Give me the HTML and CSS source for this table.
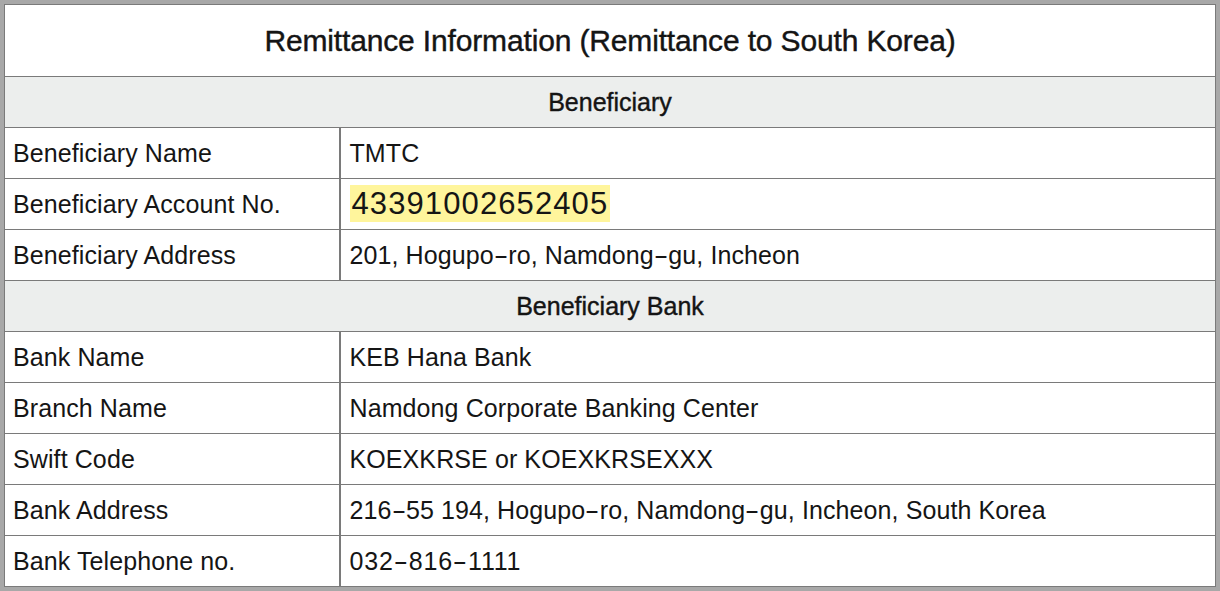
FILE: index.html
```html
<!DOCTYPE html>
<html lang="en">
<head>
<meta charset="utf-8">
<title>Remittance Information</title>
<link rel="stylesheet" href="styles.css">
</head>
<body>
<div class="frame">
  <table class="remit">
    <colgroup>
      <col class="col-label">
      <col class="col-value">
    </colgroup>
    <thead>
      <tr><th colspan="2" class="title">Remittance Information (Remittance to South Korea)</th></tr>
    </thead>
    <tbody>
      <tr><th colspan="2" class="section">Beneficiary</th></tr>
      <tr><td class="label">Beneficiary Name</td><td class="value">TMTC</td></tr>
      <tr><td class="label">Beneficiary Account No.</td><td class="value"><span class="mark">43391002652405</span></td></tr>
      <tr><td class="label">Beneficiary Address</td><td class="value">201, Hogupo<span class="hy">-</span>ro, Namdong<span class="hy">-</span>gu, Incheon</td></tr>
      <tr><th colspan="2" class="section">Beneficiary Bank</th></tr>
      <tr><td class="label">Bank Name</td><td class="value">KEB Hana Bank</td></tr>
      <tr><td class="label">Branch Name</td><td class="value">Namdong Corporate Banking Center</td></tr>
      <tr><td class="label">Swift Code</td><td class="value">KOEXKRSE or KOEXKRSEXXX</td></tr>
      <tr><td class="label">Bank Address</td><td class="value">216<span class="hy">-</span>55 194, Hogupo<span class="hy">-</span>ro, Namdong<span class="hy">-</span>gu, Incheon, South Korea</td></tr>
      <tr><td class="label">Bank Telephone no.</td><td class="value phone">032<span class="hy">-</span>816<span class="hy">-</span>1111</td></tr>
    </tbody>
  </table>
</div>
</body>
</html>
```
FILE: styles.css
```css
html, body {
  margin: 0;
  padding: 0;
}
body {
  background: #a8a8a8;
  font-family: "Liberation Sans", Arial, sans-serif;
  color: #151515;
}
.frame {
  padding: 4px 4px 5px 4px;
}
.remit {
  width: 100%;
  border-collapse: collapse;
  background: #fff;
  border: 1px solid #707070;
  table-layout: fixed;
}
.col-label { width: 335px; }
.remit th, .remit td {
  border: 1px solid #7a7a7a;
  padding: 0;
  box-sizing: border-box;
}
.remit .title {
  height: 72px;
  font-size: 30px;
  font-weight: normal;
  text-align: center;
  letter-spacing: -0.15px;
  -webkit-text-stroke: 0.4px #111;
}
.remit .section {
  height: 51px;
  background: #eceeed;
  font-size: 25px;
  font-weight: normal;
  text-align: center;
  -webkit-text-stroke: 0.4px #111;
}
.remit .label, .remit .value {
  height: 51px;
  font-size: 25px;
  text-align: left;
  vertical-align: middle;
  letter-spacing: 0.1px;
}
.remit .label {
  padding-left: 8px;
}
.remit .value {
  padding-left: 9px;
  border-left: 2px solid #7a7a7a;
}
.remit .phone {
  letter-spacing: 0.8px;
}
.hy {
  display: inline-block;
  margin: 0 3px;
  transform: scaleX(1.75);
}
.mark {
  background: #fff59c;
  font-size: 31px;
  padding: 1px 2px;
  letter-spacing: 1.1px;
}
```
